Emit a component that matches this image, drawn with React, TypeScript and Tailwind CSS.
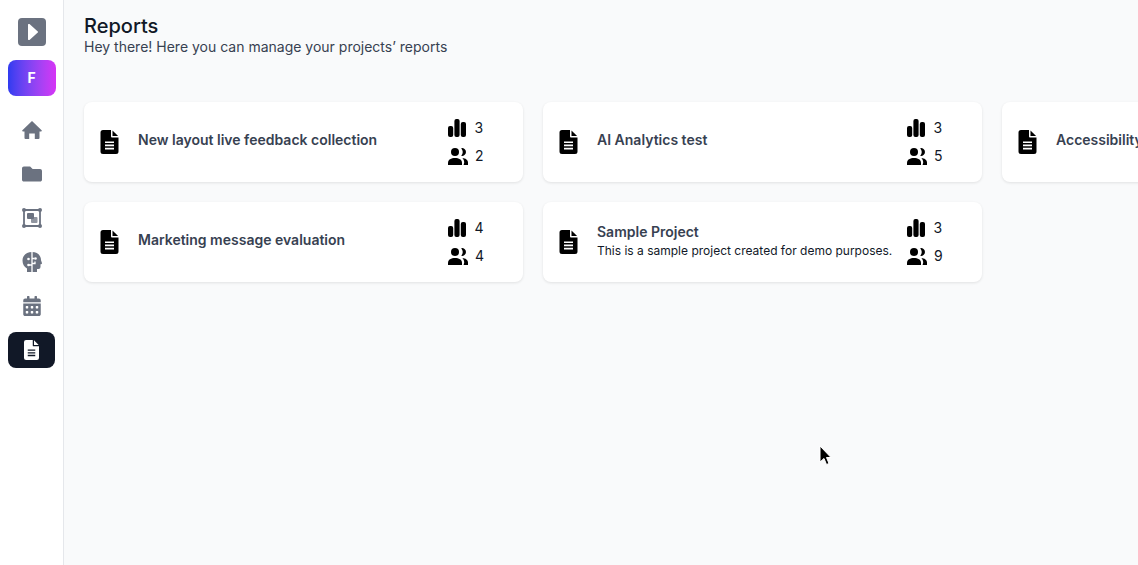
import { FaFolder, FaCalendarAlt } from 'react-icons/fa'

const PROJECTS = [
  [
    { title: 'New layout live feedback collection', reports: 3, people: 2 },
    { title: 'AI Analytics test', reports: 3, people: 5 },
    { title: 'Accessibility test', reports: 2, people: 3 },
  ],
  [
    { title: 'Marketing message evaluation', reports: 4, people: 4 },
    {
      title: 'Sample Project',
      description: 'This is a sample project created for demo purposes.',
      reports: 3,
      people: 9,
    },
  ],
]

function FileIcon({ className, lines }: { className: string; lines: string }) {
  return (
    <svg viewBox="0 0 18 24" className={className}>
      <path d="M2.500 0H10.500V6.500a1 1 0 0 0 1 1H18V21.500a2.500 2.500 0 0 1-2.500 2.500h-13A2.500 2.500 0 0 1 0 21.500V2.500A2.500 2.500 0 0 1 2.500 0z" fill="currentColor" />
      <path d="M12 0.400 17.600 6H12z" fill="currentColor" />
      <path d="M4.500 12.200h9M4.500 15.400h9M4.500 18.600h9" stroke={lines} strokeWidth="1.600" fill="none" />
    </svg>
  )
}

function BarsIcon() {
  return (
    <svg width="18" height="18" viewBox="0 0 18 18" className="text-black" fill="currentColor">
      <rect x="0" y="7" width="5.200" height="11" rx="2" />
      <rect x="6.400" y="0" width="5.200" height="18" rx="2" />
      <rect x="12.800" y="3" width="5.200" height="15" rx="2" />
    </svg>
  )
}

function UsersIcon() {
  return (
    <svg width="20" height="17" viewBox="0 0 20 17" className="text-black" fill="currentColor">
      <circle cx="7" cy="4" r="4" />
      <path d="M13.200 7.800a3.900 3.900 0 1 0 0-7.600 6 6 0 0 1 0 7.600z" />
      <path d="M0 17v-2.200C0 11.600 3.200 10 7 10s7 1.600 7 4.800V17z" />
      <path d="M15.600 17H20v-2.400c0-2.600-2.500-4.200-5.600-4.500 1.100 1.100 1.800 2.600 1.800 4.500z" />
    </svg>
  )
}

function HomeIcon() {
  return (
    <svg width="20" height="20" viewBox="0 0 20 20" fill="currentColor" className="text-[#6b7280]">
      <path d="M10 1 19.600 10.200a.7.700 0 0 1-.5 1.200H17.500V18a1 1 0 0 1-1 1H12.800V13.500H7.200V19H3.500a1 1 0 0 1-1-1V11.400H.9a.7.700 0 0 1-.5-1.200z" />
    </svg>
  )
}

function CanvasIcon() {
  return (
    <svg width="20" height="20" viewBox="0 0 20 20" fill="currentColor" className="text-[#6b7280]">
      <path d="M2 2h16v16H2z" fill="none" stroke="currentColor" strokeWidth="1.800" />
      <circle cx="2" cy="2" r="2" />
      <circle cx="18" cy="2" r="2" />
      <circle cx="2" cy="18" r="2" />
      <circle cx="18" cy="18" r="2" />
      <rect x="5" y="5" width="7" height="6" rx="1" />
      <rect x="9" y="9" width="6.500" height="6" rx="1" opacity="0.75" />
    </svg>
  )
}

function HeadIcon() {
  return (
    <svg width="20" height="20" viewBox="0 0 20 20" className="text-[#6b7280]">
      <path d="M10 0c5.500 0 9 3.600 9 8 0 .9.900 2.200 1 3.200 0 .7-.8 1-1.500 1V15a2 2 0 0 1-2 2H15v3H5v-3.500C2 15 .5 12 .5 8.500.5 3.600 4.500 0 10 0z" fill="currentColor" />
      <path d="M10 0V6.500h2.500M10 6.500V20M10 13H7M13 9.500V11.500H10" fill="none" stroke="white" strokeWidth="1.300" />
      <circle cx="13.500" cy="6.500" r="1.300" fill="white" />
      <circle cx="6.500" cy="13" r="1.300" fill="white" />
      <circle cx="6.500" cy="7" r="1.300" fill="white" />
    </svg>
  )
}

function ProjectCard({ title, description, reports, people }: { title: string; description?: string; reports: number; people: number }) {
  return (
    <div className="w-[439px] h-20 shrink-0 bg-white rounded-lg shadow-[0_1px_3px_rgba(0,0,0,0.1)] flex items-center pl-4">
      <FileIcon className="text-black shrink-0 w-[19px] h-6" lines="white" />
      <div className="ml-[19px] w-[310px] shrink-0 mb-1">
        <div className="text-sm leading-5 font-semibold text-[#374151]">{title}</div>
        {description && <div className="mt-[1px] text-xs leading-4 text-[#111827] whitespace-nowrap">{description}</div>}
      </div>
      <div className="flex flex-col gap-2">
        <div className="flex items-center gap-[8.500px] h-5">
          <BarsIcon />
          <span className="text-sm leading-5 text-[#111827]">{reports}</span>
        </div>
        <div className="flex items-center gap-[7px] h-5">
          <UsersIcon />
          <span className="text-sm leading-5 text-[#111827]">{people}</span>
        </div>
      </div>
    </div>
  )
}

export default function App() {
  return (
    <div className="relative flex h-[565px] w-[1138px] overflow-hidden bg-[#f9fafb] font-['Inter',sans-serif]">
      <aside className="w-16 shrink-0 h-full bg-white border-r border-[#e5e7eb] flex flex-col items-center pt-[18px]">
        <div className="w-7 h-7 rounded bg-[#6b7280] flex items-center justify-center ml-[1px]">
          <svg width="10" height="16" viewBox="0 0 10 16" className="text-white ml-[1px]" fill="currentColor">
            <path d="M1.500 0a1 1 0 0 0-1.500.9v14.200a1 1 0 0 0 1.500.9L9.500 8.800a1 1 0 0 0 0-1.600z" />
          </svg>
        </div>
        <div className="mt-[14px] w-12 h-9 rounded-lg bg-gradient-to-r from-[#2f3bf0] to-[#d633f5] flex items-center justify-center text-white text-sm font-bold ml-[1px] pr-[1px]">
          F
        </div>
        <nav className="mt-[12px] flex flex-col items-center">
          <div className="h-11 flex items-center justify-center ml-[1px]"><HomeIcon /></div>
          <div className="h-11 flex items-center justify-center ml-[1px]"><FaFolder className="text-[#6b7280] w-5 h-5" /></div>
          <div className="h-11 flex items-center justify-center ml-[1px]"><CanvasIcon /></div>
          <div className="h-11 flex items-center justify-center ml-[1px]"><HeadIcon /></div>
          <div className="h-11 flex items-center justify-center ml-[1px]"><FaCalendarAlt className="text-[#6b7280] w-[18px] h-5" /></div>
          <div className="mt-[4px] w-[47px] h-9 rounded-lg bg-[#111827] flex items-center justify-center">
            <FileIcon className="text-white w-[15px] h-5" lines="#111827" />
          </div>
        </nav>
      </aside>
      <main className="flex-1 min-w-0 pl-5 pt-[14px]">
        <h1 className="text-xl leading-6 font-medium text-[#111827]">Reports</h1>
        <p className="text-sm leading-5 text-[#374151] mt-[-1px]">Hey there! Here you can manage your projects’ reports</p>
        <div className="mt-[45px] flex flex-col gap-5">
          {PROJECTS.map((row, i) => (
            <div key={i} className="flex gap-5">
              {row.map(p => <ProjectCard key={p.title} {...p} />)}
            </div>
          ))}
        </div>
      </main>
      {/* mouse pointer caught in the capture */}
      <svg className="absolute left-[818px] top-[445px]" width="14" height="22" viewBox="0 0 14 22">
        <path d="M2 1v16l4-3.500 2.500 6 2.500-1-2.500-6H13z" fill="#000" stroke="#fff" strokeWidth="1" />
      </svg>
    </div>
  )
}
